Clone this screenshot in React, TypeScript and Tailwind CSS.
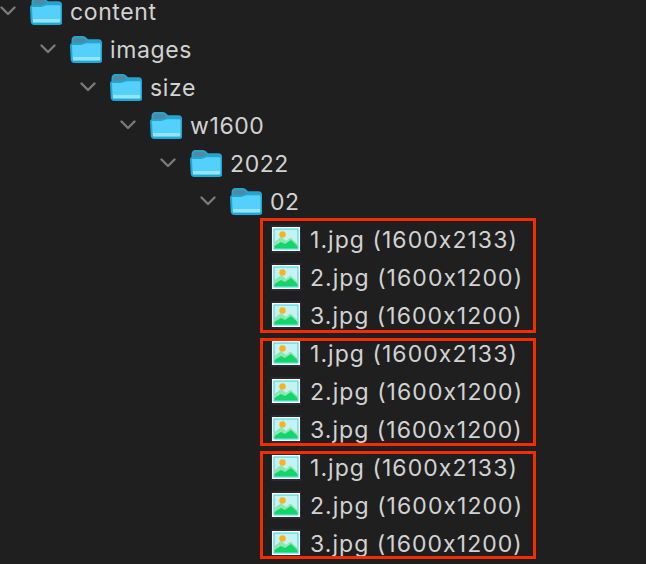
import React from 'react';

const folders = ['content', 'images', 'size', 'w1600', '2022', '02'];
const files = ['1.jpg (1600x2133)', '2.jpg (1600x1200)', '3.jpg (1600x1200)'];

function Chevron() {
  return (
    <svg width="16" height="10" viewBox="0 0 16 10" fill="none" className="shrink-0">
      <path d="M1.5 1.5L8 8L14.5 1.5" stroke="#7a7a7a" strokeWidth="2.4" strokeLinecap="round" strokeLinejoin="round" />
    </svg>
  );
}

function FolderIcon() {
  return (
    <svg width="32" height="27" viewBox="0 0 32 27" className="shrink-0">
      <path d="M2.5 4.5Q2.5 1 5.5 1H13Q14.5 1 15.5 2.2L17.5 4.3H28.5Q31 4.3 31 7V14H2.5Z" fill="#4b8ba6" stroke="#2aa4cc" strokeWidth="2" />
      <path d="M1 9.5Q1 8 2.5 8H11Q13 8 14.5 6.8Q15.5 6.2 17 6.2H29.5Q31.5 6.2 31.5 8.2V23.5Q31.5 26 29 26H4Q2 26 1.7 23.5Z" fill="#55d0fb" stroke="#22a6d2" strokeWidth="2" />
      <rect x="3" y="21" width="27" height="3" fill="#93e4fd" />
    </svg>
  );
}

function ImageIcon() {
  return (
    <div className="w-[30px] h-[28px] shrink-0 bg-[#2a2a36] flex items-center justify-center">
      <svg width="28" height="24" viewBox="0 0 28 24">
        <rect width="28" height="24" fill="#ffffff" />
        <rect x="2" y="2" width="24" height="20" fill="#c5f3f3" stroke="#2fd3e0" strokeWidth="1" />
        <circle cx="10.5" cy="7.5" r="3.2" fill="#fdb022" />
        <path d="M2.5 20V15L9 10L14 14L18.5 10.5L25.5 17V20Z" fill="#8ee6b0" />
        <path d="M2.5 21.5V19L9 15L13 17L19 13L25.5 19V21.5Z" fill="#12d668" />
      </svg>
    </div>
  );
}

function FolderRow({ name, level }: { name: string; level: number }) {
  return (
    <div className="h-[38px] flex items-center" style={{ paddingLeft: level * 40 }}>
      <Chevron />
      <div className="ml-[14px]">
        <FolderIcon />
      </div>
      <span className="ml-[8px] mt-[2px] leading-[22px] tracking-[0.6px]">{name}</span>
    </div>
  );
}

function FileGroup({ top, height }: { top: number; height: number }) {
  return (
    <div
      className="absolute left-[260px] w-[276px] border-[3px] border-[#f52c00]"
      style={{ top, height }}
    />
  );
}

export default function App() {
  return (
    <div className="relative w-[646px] h-[564px] overflow-hidden bg-[#1f1f1f] text-[#d2d2d2] text-[23px] font-['Inter','Liberation_Sans',sans-serif]">
      <div className="-mt-[8px]">
        {folders.map((name, i) => (
          <FolderRow key={name} name={name} level={i} />
        ))}
        {[0, 1, 2].map((g) => (
          <div key={g}>
            {files.map((f) => (
              <div key={f} className="h-[38px] flex items-center pl-[271px]">
                <ImageIcon />
                <span className="ml-[9px] mt-[2px] leading-[22px] whitespace-nowrap tracking-[1.05px]">{f}</span>
              </div>
            ))}
          </div>
        ))}
      </div>
      <FileGroup top={218} height={115} />
      <FileGroup top={338} height={108} />
      <FileGroup top={451} height={108} />
    </div>
  );
}
